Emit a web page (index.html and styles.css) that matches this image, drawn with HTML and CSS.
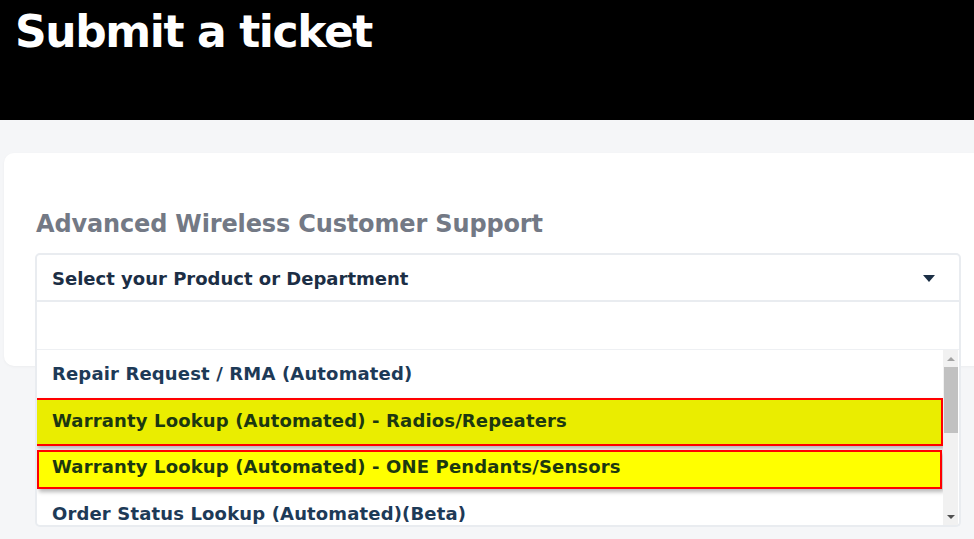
FILE: index.html
```html
<!DOCTYPE html>
<html lang="en">
<head>
<meta charset="utf-8">
<title>Submit a ticket</title>
<link rel="stylesheet" href="styles.css">
</head>
<body>
<header class="hero">
  <h1 class="hero-title">Submit a ticket</h1>
</header>
<main class="page">
  <section class="card">
    <h2 class="card-title">Advanced Wireless Customer Support</h2>
    <div class="select">
      <div class="select-box">
        <span class="select-label">Select your Product or Department</span>
        <span class="caret"></span>
      </div>
      <div class="dropdown">
        <div class="search"></div>
        <div class="results">
          <ul class="options">
            <li class="option">Repair Request / RMA (Automated)</li>
            <li class="option option-hl option-hl-a">Warranty Lookup (Automated) - Radios/Repeaters</li>
            <li class="option option-hl option-hl-b">Warranty Lookup (Automated) - ONE Pendants/Sensors</li>
            <li class="option option-last">Order Status Lookup (Automated)(Beta)</li>
          </ul>
          <div class="scrollbar">
            <span class="sb-up"></span>
            <span class="sb-thumb"></span>
            <span class="sb-fill"></span>
            <span class="sb-down"></span>
          </div>
        </div>
      </div>
    </div>
  </section>
</main>
</body>
</html>
```
FILE: styles.css
```css
html, body {
  margin: 0;
  padding: 0;
}
body {
  background: #f5f6f8;
  font-family: "DejaVu Sans", "Liberation Sans", sans-serif;
  font-weight: bold;
  overflow: hidden;
  height: 539px;
}
.hero {
  background: #000;
  height: 120px;
  padding: 10px 0 0 15px;
  box-sizing: border-box;
}
.hero-title {
  margin: 0;
  color: #fff;
  font-size: 44px;
  line-height: 44px;
  letter-spacing: -1.4px;
  font-weight: bold;
}
.page {
  padding: 33px 0 0 4px;
}
.card {
  background: #fff;
  margin-right: -20px;
  height: 213px;
  box-sizing: border-box;
  border-radius: 10px;
  padding: 57px 33px 0 31px;
  box-shadow: 0 1px 3px rgba(0, 0, 0, 0.04);
}
.card-title {
  margin: 0 0 0 1px;
  font-size: 24px;
  line-height: 28px;
  letter-spacing: -0.15px;
  color: #737985;
}
.select {
  position: relative;
  margin-top: 15px;
}
.select-box {
  height: 49px;
  box-sizing: border-box;
  border: 2px solid #e9ecf0;
  border-radius: 5px 5px 0 0;
  display: flex;
  align-items: center;
  justify-content: space-between;
  padding: 2px 24px 0 15px;
  font-size: 18px;
  color: #1c2e45;
}
.caret {
  width: 0;
  height: 0;
  border-left: 6px solid transparent;
  border-right: 6px solid transparent;
  border-top: 7px solid #1b2f45;
  margin-top: 0;
}
.dropdown {
  position: absolute;
  top: 100%;
  left: 0;
  right: 0;
  height: 225px;
  box-sizing: border-box;
  background: #fff;
  border: 2px solid #e9ecf0;
  border-top: 0;
  border-radius: 0 0 5px 5px;
  display: flex;
  flex-direction: column;
}
.search {
  height: 47px;
  border-bottom: 1px solid #eef0f3;
  flex: none;
}
.results {
  flex: 1;
  display: flex;
  min-height: 0;
}
.options {
  flex: 1;
  list-style: none;
  margin: 0;
  padding: 0;
  overflow: hidden;
  font-size: 18px;
  letter-spacing: 0.15px;
  color: #1d3a57;
}
.option {
  height: 47px;
  box-sizing: border-box;
  display: flex;
  align-items: center;
  padding-left: 15px;
  white-space: nowrap;
}
.option-hl {
  border: 2px solid #ff0000;
  color: #1c3810;
  box-shadow: 2px 3px 4px rgba(0, 0, 0, 0.28);
  position: relative;
}
.option-hl-a {
  background: #eaed00;
  height: 48px;
  margin: 1px 0 0 -2px;
  padding: 0 0 4px 15px;
}
.option-hl-b {
  background: #ffff00;
  height: 39px;
  margin: 4px 1px 0 0;
  padding: 0 0 6px 13px;
}
.option-last {
  margin-top: 2px;
  padding-bottom: 2px;
}
.scrollbar {
  width: 15px;
  margin-right: 1px;
  background: #f1f1f1;
  display: flex;
  flex-direction: column;
  align-items: center;
}
.sb-up, .sb-down {
  width: 0;
  height: 0;
  border-left: 4px solid transparent;
  border-right: 4px solid transparent;
  flex: none;
}
.sb-up {
  border-bottom: 4px solid #a3a3a3;
  margin: 7px 0 6px;
}
.sb-thumb {
  width: 14px;
  height: 66px;
  background: #c1c1c1;
  flex: none;
}
.sb-fill {
  flex: 1;
}
.sb-down {
  border-top: 4px solid #505050;
  margin: 0 0 6px;
}
```
